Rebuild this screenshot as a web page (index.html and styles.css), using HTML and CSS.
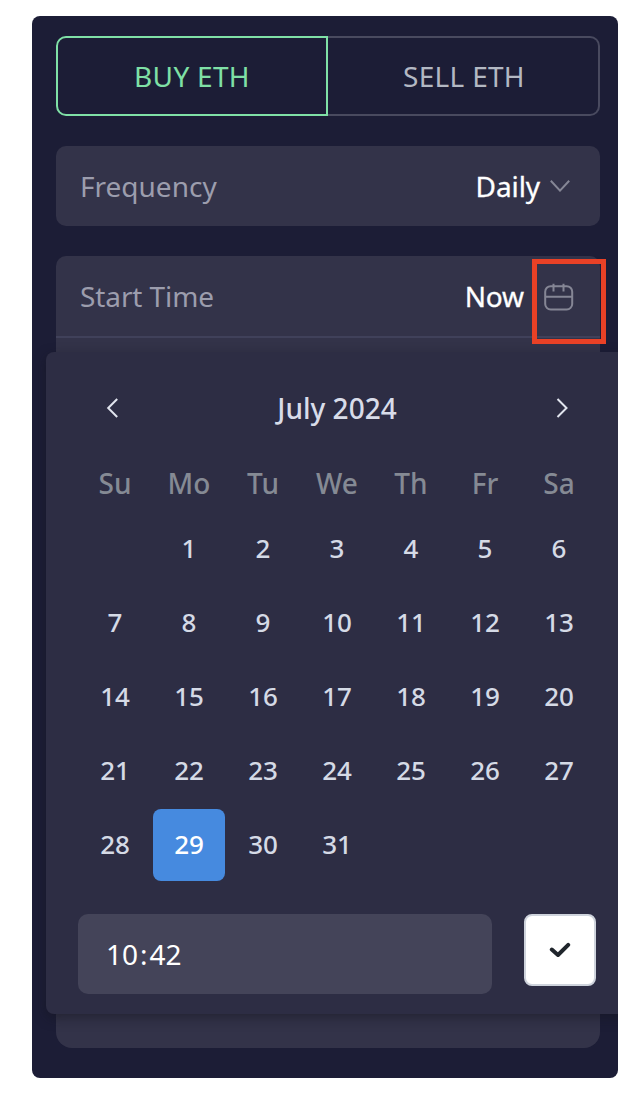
FILE: index.html
```html
<!DOCTYPE html>
<html lang="en">
<head>
<meta charset="utf-8">
<title>Buy ETH</title>
<link rel="stylesheet" href="styles.css">
</head>
<body>
<main class="panel">
  <div class="tabs">
    <div class="tab tab-buy">BUY ETH</div>
    <div class="tab tab-sell">SELL ETH</div>
  </div>
  <div class="field row">
    <span class="label">Frequency</span>
    <span class="value">Daily</span>
    <svg class="chevron" width="20" height="12" viewBox="0 0 20 12"><path d="M.8 .8L10 10.6L19.2 .8"/></svg>
  </div>
  <section class="group">
    <div class="row start">
      <span class="label">Start Time</span>
      <span class="value">Now</span>
      <svg class="cal-icon" width="30" height="28" viewBox="0 0 30 28"><rect x="1.2" y="3.2" width="27" height="23.3" rx="5.5"/><path d="M1.2 13.7H28.2M9.5 .8V8.6M19.5 .8V8.6"/></svg>
      <span class="highlight"></span>
    </div>
    <div class="picker">
      <div class="month">
        <svg width="12" height="20" viewBox="0 0 12 20"><path d="M11.2 1L2.2 10L11.2 19"/></svg>
        <span>July 2024</span>
        <svg width="12" height="20" viewBox="0 0 12 20"><path d="M1.5 1L10.5 10L1.5 19"/></svg>
      </div>
      <div class="weekdays"><span>Su</span><span>Mo</span><span>Tu</span><span>We</span><span>Th</span><span>Fr</span><span>Sa</span></div>
      <div class="days">
        <span></span><span>1</span><span>2</span><span>3</span><span>4</span><span>5</span><span>6</span>
        <span>7</span><span>8</span><span>9</span><span>10</span><span>11</span><span>12</span><span>13</span>
        <span>14</span><span>15</span><span>16</span><span>17</span><span>18</span><span>19</span><span>20</span>
        <span>21</span><span>22</span><span>23</span><span>24</span><span>25</span><span>26</span><span>27</span>
        <span>28</span><span class="selected">29</span><span>30</span><span>31</span>
      </div>
      <div class="footer">
        <div class="time"><span>10</span><span>:</span><span>42</span></div>
        <div class="confirm"><svg width="22" height="16" viewBox="0 0 22 16"><path d="M2.8 7.5L9 13L19.2 2.8"/></svg></div>
      </div>
    </div>
  </section>
</main>
</body>
</html>
```
FILE: styles.css
```css
* { box-sizing: border-box; }
body {
  margin: 0;
  padding: 16px 26px 24px 32px;
  background: #fff;
  font-family: "Noto Sans", "Open Sans", sans-serif;
  font-size: 28px;
  line-height: 38px;
}
svg { display: block; fill: none; flex: none; }
.panel {
  height: 1062px;
  padding: 20px 18px 30px 24px;
  display: flex;
  flex-direction: column;
  gap: 30px;
  background: #1c1d36;
  border-radius: 8px;
  overflow: hidden;
}
.tabs { display: flex; height: 80px; }
.tab { display: flex; align-items: center; justify-content: center; width: 272px; border: 2px solid; letter-spacing: .3px; }
.tab-buy { color: #7fe0a6; border-color: #7fe0a6; border-radius: 10px 0 0 10px; }
.tab-sell { padding-left: 2px; color: #b3b8c3; border-color: #494a5f; border-left: 0; border-radius: 0 10px 10px 0; }
.row { display: flex; align-items: center; height: 80px; padding: 0 30px 0 24px; }
.field { width: 544px; background: #333349; border-radius: 10px; }
.label { flex: 1; color: #9c9dad; }
.start .label { letter-spacing: -.1px; }
.value { color: #fff; letter-spacing: -.1px; -webkit-text-stroke: .3px #fff; }
.chevron { margin: -1px 0 0 10px; stroke: #858695; stroke-width: 2; }
.group { width: 544px; height: 792px; background: #333349; border-radius: 10px 10px 16px 16px; }
.start { position: relative; height: 82px; padding: 0 26px 0 24px; border-bottom: 2px solid #40415a; }
.cal-icon { margin: 2px 0 0 20px; stroke: #858695; stroke-width: 2; }
.highlight { position: absolute; left: 476px; top: 3px; width: 74px; height: 85px; border: 5px solid #e94126; }
.picker {
  width: 582px;
  height: 662px;
  margin: 14px 0 0 -10px;
  padding: 32px;
  background: #2d2d44;
  border-radius: 8px;
  box-shadow: 0 4px 12px rgba(20, 20, 30, .5);
}
.month { display: flex; align-items: center; justify-content: space-between; height: 48px; padding: 0 28px; color: #d8dce9; font-weight: 500; }
.month svg { stroke: #e1e4ee; stroke-width: 2; }
.weekdays, .days { display: grid; grid-template-columns: repeat(7, 74px); text-align: center; font-weight: 500; }
.weekdays { height: 80px; padding-top: 32px; color: #858a94; }
.days { grid-auto-rows: 74px; font-size: 26px; color: #d5dae6; }
.days span { display: flex; align-items: center; justify-content: center; margin: 1px; padding-bottom: 2px; }
.days .selected { color: #fff; background: #468adf; border-radius: 8px; }
.footer { display: flex; gap: 32px; margin-top: 32px; }
.time { display: flex; align-items: center; gap: 2px; width: 414px; height: 80px; padding: 0 28px; color: #fff; background: #444459; border-radius: 10px; }
.confirm { display: flex; align-items: center; justify-content: center; width: 72px; height: 72px; background: #fff; border: 2px solid #ced3dc; border-radius: 8px; }
.confirm svg { stroke: #20252c; stroke-width: 4; stroke-linecap: round; stroke-linejoin: round; }
```
